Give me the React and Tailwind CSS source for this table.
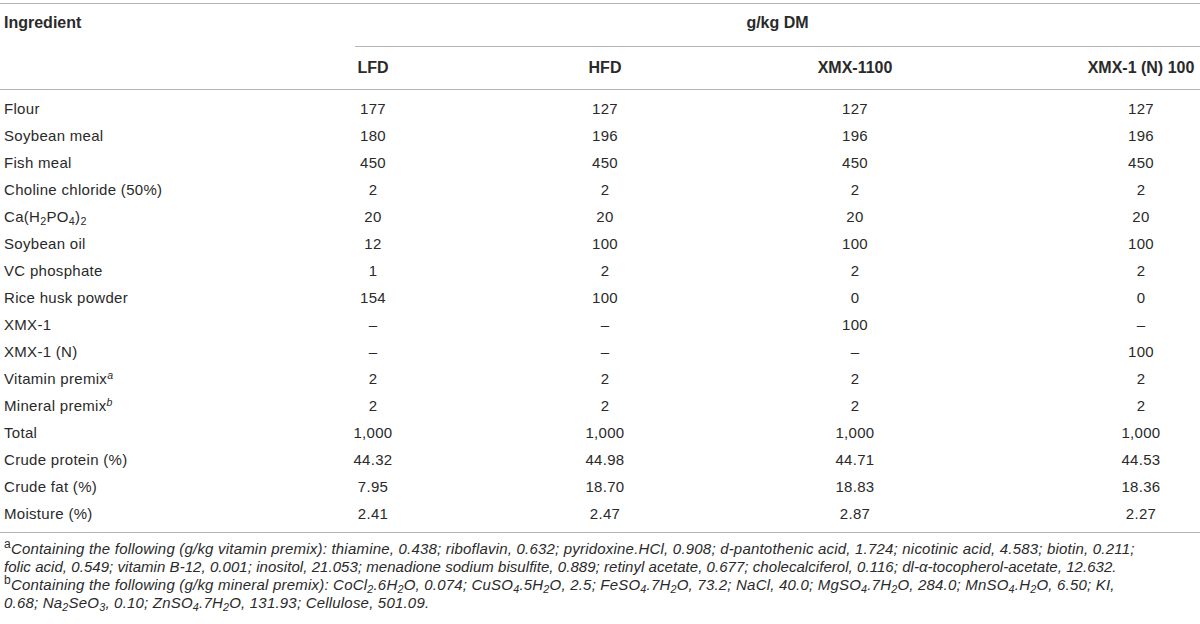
import React from 'react';

const rows = [
  { name: 'Flour', v: ['177', '127', '127', '127'] },
  { name: 'Soybean meal', v: ['180', '196', '196', '196'] },
  { name: 'Fish meal', v: ['450', '450', '450', '450'] },
  { name: 'Choline chloride (50%)', v: ['2', '2', '2', '2'] },
  { name: 'ca', v: ['20', '20', '20', '20'] },
  { name: 'Soybean oil', v: ['12', '100', '100', '100'] },
  { name: 'VC phosphate', v: ['1', '2', '2', '2'] },
  { name: 'Rice husk powder', v: ['154', '100', '0', '0'] },
  { name: 'XMX-1', v: ['–', '–', '100', '–'] },
  { name: 'XMX-1 (N)', v: ['–', '–', '–', '100'] },
  { name: 'vit', v: ['2', '2', '2', '2'] },
  { name: 'min', v: ['2', '2', '2', '2'] },
  { name: 'Total', v: ['1,000', '1,000', '1,000', '1,000'] },
  { name: 'Crude protein (%)', v: ['44.32', '44.98', '44.71', '44.53'] },
  { name: 'Crude fat (%)', v: ['7.95', '18.70', '18.83', '18.36'] },
  { name: 'Moisture (%)', v: ['2.41', '2.47', '2.87', '2.27'] },
];

const Sub = ({ children }) => <sub className="text-[0.72em] leading-none">{children}</sub>;

const Label = ({ name }) => {
  if (name === 'ca') return <>Ca(H<Sub>2</Sub>PO<Sub>4</Sub>)<Sub>2</Sub></>;
  if (name === 'vit') return <>Vitamin premix<sup className="text-[0.7em] italic">a</sup></>;
  if (name === 'min') return <>Mineral premix<sup className="text-[0.7em] italic">b</sup></>;
  return name;
};

// value columns centred at x = 373, 605, 855, 1141
const Cols = ({ v }) => (
  <>
    <div className="w-[54px] text-center">{v[0]}</div>
    <div className="w-[160px]" />
    <div className="w-[90px] text-center">{v[1]}</div>
    <div className="w-[150px]" />
    <div className="w-[110px] text-center">{v[2]}</div>
    <div className="w-[172px]" />
    <div className="w-[118px] text-center">{v[3]}</div>
  </>
);

export default function App() {
  return (
    <div className="w-[1200px] h-[624px] bg-white text-[#2a2a2a] overflow-hidden pt-[3px]" style={{ fontFamily: '"Liberation Sans", Arial, sans-serif' }}>
      {/* header */}
      <div className="border-t border-b border-[#b4b4b4]">
        <div className="h-[43px] flex text-[16px] font-bold leading-[20px]">
          <div className="w-[355px] pl-[4px] pt-[9px]">Ingredient</div>
          <div className="flex-1 border-b border-[#b4b4b4] pt-[9px] text-center">g/kg DM</div>
        </div>
        <div className="h-[42px] flex items-center text-[16px] font-bold whitespace-nowrap">
          <div className="w-[346px]" />
          <Cols v={['LFD', 'HFD', 'XMX-1100', 'XMX-1 (N) 100']} />
        </div>
      </div>

      {/* body */}
      <div className="border-b border-[#b4b4b4] pt-[6px] pb-[4px]">
        {rows.map((r) => (
          <div key={r.name} className="h-[27px] flex items-center text-[15px] tracking-[0.3px] whitespace-nowrap">
            <div className="w-[346px] pl-[4px]"><Label name={r.name} /></div>
            <Cols v={r.v} />
          </div>
        ))}
      </div>

      {/* footnotes */}
      <div className="pl-[4px] pt-[7px] text-[15px] leading-[18px] tracking-[0.2px] italic whitespace-nowrap">
        <div>
          <sup className="not-italic text-[0.8em]">a</sup>Containing the following (g/kg vitamin premix): thiamine, 0.438; riboflavin, 0.632; pyridoxine.HCl, 0.908; d-pantothenic acid, 1.724; nicotinic acid, 4.583; biotin, 0.211;
        </div>
        <div className="tracking-[0.05px]">
          folic acid, 0.549; vitamin B-12, 0.001; inositol, 21.053; menadione sodium bisulfite, 0.889; retinyl acetate, 0.677; cholecalciferol, 0.116; dl-α-tocopherol-acetate, 12.632.
        </div>
        <div>
          <sup className="not-italic text-[0.8em]">b</sup>Containing the following (g/kg mineral premix): CoCl<Sub>2</Sub>.6H<Sub>2</Sub>O, 0.074; CuSO<Sub>4</Sub>.5H<Sub>2</Sub>O, 2.5; FeSO<Sub>4</Sub>.7H<Sub>2</Sub>O, 73.2; NaCl, 40.0; MgSO<Sub>4</Sub>.7H<Sub>2</Sub>O, 284.0; MnSO<Sub>4</Sub>.H<Sub>2</Sub>O, 6.50; KI,
        </div>
        <div>
          0.68; Na<Sub>2</Sub>SeO<Sub>3</Sub>, 0.10; ZnSO<Sub>4</Sub>.7H<Sub>2</Sub>O, 131.93; Cellulose, 501.09.
        </div>
      </div>
    </div>
  );
}
